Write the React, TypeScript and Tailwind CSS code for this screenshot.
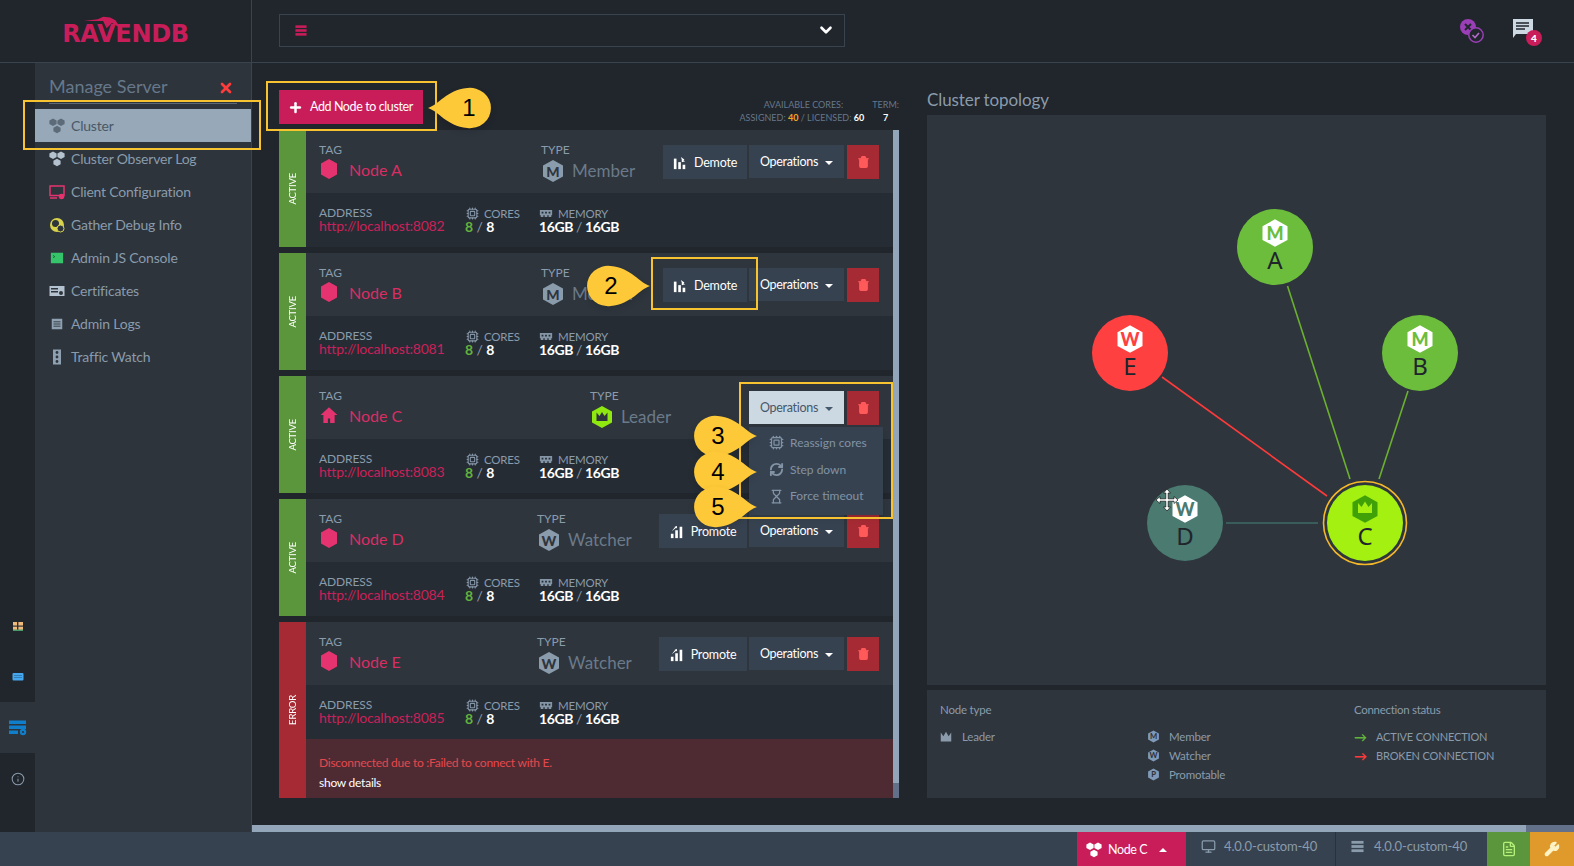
import React from 'react';
import { Plus, ChevronDown, Trash2, Cpu, Monitor, FileText, Wrench, Info, Hourglass, X, RefreshCw } from 'lucide-react';

type NodeInfo = {
    name: string;
    tagIcon?: 'home';
    type: string;
    typeLetter: string;
    typeWidth: string;
    action?: 'Demote' | 'Promote';
    actionWidth: string;
    url: string;
    status: string;
    open?: boolean;
    error?: boolean;
};

const nodes: NodeInfo[] = [
    { name: 'Node A', type: 'Member', typeLetter: 'M', typeWidth: 'w-[122px]', action: 'Demote', actionWidth: 'w-[84px]', url: 'http://localhost:8082', status: 'ACTIVE' },
    { name: 'Node B', type: 'Member', typeLetter: 'M', typeWidth: 'w-[122px]', action: 'Demote', actionWidth: 'w-[84px]', url: 'http://localhost:8081', status: 'ACTIVE' },
    { name: 'Node C', tagIcon: 'home', type: 'Leader', typeLetter: '', typeWidth: 'w-[159px]', actionWidth: '', url: 'http://localhost:8083', status: 'ACTIVE', open: true },
    { name: 'Node D', type: 'Watcher', typeLetter: 'W', typeWidth: 'w-[122px]', action: 'Promote', actionWidth: 'w-[88px]', url: 'http://localhost:8084', status: 'ACTIVE' },
    { name: 'Node E', type: 'Watcher', typeLetter: 'W', typeWidth: 'w-[122px]', action: 'Promote', actionWidth: 'w-[88px]', url: 'http://localhost:8085', status: 'ERROR', error: true },
];

const HEX = '12,1 22,6.5 22,17.5 12,23 2,17.5 2,6.5';

const Hex = ({ fill, letter, letterFill, className }: { fill: string; letter?: string; letterFill?: string; className?: string }) => (
    <svg viewBox="0 0 24 24" className={className}>
        <polygon points={HEX} fill={fill} />
        {letter && <text x="12" y="17.5" textAnchor="middle" fontSize="14" fontWeight="900" fill={letterFill}>{letter}</text>}
    </svg>
);

const ClusterIcon = ({ fill, className }: { fill: string; className?: string }) => (
    <svg viewBox="0 0 16 16" className={className} fill={fill}>
        <polygon points="4,0.5 7.6,2.4 7.6,6 4,7.9 0.4,6 0.4,2.4" />
        <polygon points="12,0.5 15.6,2.4 15.6,6 12,7.9 8.4,6 8.4,2.4" />
        <polygon points="8,7.8 11.6,9.7 11.6,13.3 8,15.2 4.4,13.3 4.4,9.7" />
    </svg>
);

const Crown = ({ fill, className }: { fill: string; className?: string }) => (
    <svg viewBox="0 0 16 16" className={className} fill={fill}>
        <path d="M1 2l3.5 5L8 1l3.5 6L15 2v12H1z" />
    </svg>
);

const StackIcon = ({ className }: { className?: string }) => (
    <svg viewBox="0 0 14 14" className={className} fill="currentColor">
        <rect x="0.5" y="1" width="13" height="3" />
        <rect x="0.5" y="5.5" width="13" height="3" />
        <rect x="0.5" y="10" width="13" height="3" />
    </svg>
);

const DemoteIcon = () => (
    <svg viewBox="0 0 16 16" className="w-[14px] h-[14px]" fill="#fff">
        <rect x="1" y="3" width="3" height="12" />
        <rect x="6" y="7" width="3" height="8" />
        <rect x="11" y="10" width="3" height="5" />
        <path d="M9 1l4 3-1 1 2 1-4 1 0-3z" />
    </svg>
);

const PromoteIcon = () => (
    <svg viewBox="0 0 16 16" className="w-[14px] h-[14px]" fill="#fff">
        <rect x="1" y="10" width="3" height="5" />
        <rect x="6" y="6" width="3" height="9" />
        <rect x="11" y="2" width="3" height="13" />
        <path d="M2 7l4-5-1 0 3-1 0 3-1-1z" />
    </svg>
);

const MemoryIcon = () => (
    <svg viewBox="0 0 16 12" className="w-[14px] h-[11px]" fill="#8495a6">
        <path d="M1 2h14v6h-1v2h-3V8H9.5v2h-3V8H5v2H2V8H1z" />
        <rect x="3" y="4" width="2" height="2" fill="#262c34" />
        <rect x="7" y="4" width="2" height="2" fill="#262c34" />
        <rect x="11" y="4" width="2" height="2" fill="#262c34" />
    </svg>
);

const menuIcons: Record<string, React.ReactNode> = {
    'Cluster': <ClusterIcon fill="#5d6b79" className="w-4 h-4" />,
    'Cluster Observer Log': <ClusterIcon fill="#b4c2cf" className="w-4 h-4" />,
    'Client Configuration': (
        <svg viewBox="0 0 16 16" className="w-4 h-4" fill="none" stroke="#e5336f" strokeWidth="1.5">
            <rect x="1" y="2" width="14" height="9.5" />
            <path d="M1 14h7" />
            <circle cx="12.5" cy="12.5" r="2" fill="#e5336f" />
        </svg>
    ),
    'Gather Debug Info': (
        <svg viewBox="0 0 16 16" className="w-4 h-4">
            <circle cx="8" cy="8" r="7" fill="#d8d24a" />
            <circle cx="6.5" cy="6.5" r="3.5" fill="#2d343c" />
            <circle cx="11.5" cy="11.5" r="3.5" fill="#2d343c" stroke="#d8d24a" />
        </svg>
    ),
    'Admin JS Console': (
        <svg viewBox="0 0 16 16" className="w-[14px] h-[14px]">
            <rect x="1" y="2" width="14" height="12" fill="#36c46a" />
            <path d="M3.5 5l2 1.5-2 1" fill="none" stroke="#1c5a35" strokeWidth="1" />
        </svg>
    ),
    'Certificates': (
        <svg viewBox="0 0 16 16" className="w-4 h-4">
            <rect x="0.5" y="3" width="15" height="10" fill="#b4c2cf" />
            <rect x="2" y="5" width="7" height="1.5" fill="#2d343c" />
            <rect x="2" y="8" width="7" height="1.5" fill="#2d343c" />
            <circle cx="12" cy="10" r="2" fill="#2d343c" />
        </svg>
    ),
    'Admin Logs': (
        <svg viewBox="0 0 16 16" className="w-[14px] h-[14px]">
            <rect x="2" y="2" width="12" height="12" fill="#8fa0b0" />
            <path d="M4 5.5h8M4 8h8M4 10.5h8" stroke="#2d343c" strokeWidth="1" />
        </svg>
    ),
    'Traffic Watch': (
        <svg viewBox="0 0 10 16" className="w-[10px] h-4">
            <rect x="1" y="0.5" width="8" height="15" fill="#8fa0b0" />
            <circle cx="5" cy="3.5" r="1.4" fill="#2d343c" />
            <circle cx="5" cy="8" r="1.4" fill="#2d343c" />
            <circle cx="5" cy="12.5" r="1.4" fill="#2d343c" />
        </svg>
    ),
};

const MenuItem = ({ label, active }: { label: string; active?: boolean }) => (
    <div className={`h-[33px] pl-[14px] flex items-center gap-[6px] text-[14px] tracking-[-0.2px] ${active ? 'bg-[#97a8b8] text-[#4a5866]' : 'text-[#8a9bab]'}`}>
        <span className="w-4 flex justify-center">{menuIcons[label]}</span>
        {label}
    </div>
);

const Rail = () => (
    <div className="w-[35px] flex flex-col justify-end pb-[28px]">
        <div className="h-[51px] flex items-center justify-center">
            <svg viewBox="0 0 12 12" className="w-3 h-3">
                <rect x="1" y="2" width="10" height="9" fill="#f0bb78" />
                <rect x="5" y="2" width="1.4" height="9" fill="#2d343c" />
                <rect x="1" y="5.5" width="10" height="1.2" fill="#2d343c" />
                <rect x="1" y="9.5" width="10" height="1.5" fill="#4c9a6a" />
            </svg>
        </div>
        <div className="h-[51px] flex items-center justify-center">
            <svg viewBox="0 0 12 10" className="w-3 h-[10px]">
                <rect x="0.5" y="1" width="11" height="7.5" rx="1" fill="#45a8ee" />
                <path d="M2.5 3.5h7M2.5 5.5h7" stroke="#1d4a70" strokeWidth="0.9" strokeDasharray="1 1" />
            </svg>
        </div>
        <div className="h-[51px] bg-[#2d343c] flex items-center justify-center">
            <svg viewBox="0 0 20 16" className="w-5 h-4">
                <rect x="1" y="0.5" width="17" height="3.5" fill="#0f7ecb" />
                <rect x="1" y="5.5" width="17" height="3.5" fill="#0f7ecb" />
                <rect x="1" y="10.5" width="9" height="3.5" fill="#0f7ecb" />
                <circle cx="15" cy="12" r="3.2" fill="#0f7ecb" />
                <circle cx="15" cy="12" r="1.1" fill="#2d343c" />
            </svg>
        </div>
        <div className="h-[51px] flex items-center justify-center">
            <Info className="w-[14px] h-[14px] text-[#8a9bab]" strokeWidth={1.75} />
        </div>
    </div>
);

const Sidebar = () => (
    <div className="w-[217px] bg-[#2d343c] border-r border-[#3a444f] shrink-0">
        <div className="h-[41px] mx-[14px] pt-[11px] border-b border-[#5c6a78] flex justify-between items-start">
            <span className="text-[18px] leading-[24px] text-[#66788a]">Manage Server</span>
            <X className="w-[16px] h-[16px] mt-[6px] mr-[3px] text-[#ff3b3b]" strokeWidth={4} />
        </div>
        <div className="mt-[5px]">
            {Object.keys(menuIcons).map(label => (
                <MenuItem key={label} label={label} active={label === 'Cluster'} />
            ))}
        </div>
    </div>
);

const Dropdown = () => (
    <div className="absolute z-10 left-0 top-[36px] w-[134px] h-[88px] bg-[#374250] shadow-md pt-[2px] text-[12px] text-[#8193a5]">
        <div className="h-[27px] pl-[20px] flex items-center gap-[6px]"><Cpu className="w-[15px] h-[15px]" />Reassign cores</div>
        <div className="h-[27px] pl-[20px] flex items-center gap-[6px]"><RefreshCw className="w-[15px] h-[15px]" strokeWidth={3} />Step down</div>
        <div className="h-[26px] pl-[20px] flex items-center gap-[6px]"><Hourglass className="w-[15px] h-[15px]" />Force timeout</div>
    </div>
);

const NodeCard = ({ node }: { node: NodeInfo }) => (
    <div className={`flex ${node.error ? 'h-[176px]' : 'h-[117px]'}`}>
        <div className={`w-[27px] shrink-0 pl-px flex items-center justify-center ${node.error ? 'bg-[#a52a33]' : 'bg-[#5c963c]'}`}>
            <span className="[writing-mode:vertical-rl] rotate-180 text-[9.5px] tracking-[-0.2px] text-white">{node.status}</span>
        </div>
        <div className="flex-1 flex flex-col bg-[#262c34]">
            <div className="h-[63px] bg-[#2e353d] pl-[13px] pr-[14px] flex">
                <div className="flex-1 pt-[13px]">
                    <div className="text-[12px] leading-[14px] text-[#8a9bab]">TAG</div>
                    <div className="flex items-center mt-[1px] pl-px">
                        {node.tagIcon === 'home' ? (
                            <svg viewBox="0 0 16 16" className="w-[18px] h-[20px] mr-[11px] -mt-[2px] fill-[#e5336f]"><path d="M8 1L0.5 8H3v7h4v-4h2v4h4V8h2.5z" /></svg>
                        ) : (
                            <svg viewBox="0 0 18 20" className="w-[18px] h-[20px] mr-[11px] -mt-[2px] fill-[#e5336f]"><polygon points="9,0 17,4.5 17,15.5 9,20 1,15.5 1,4.5" /></svg>
                        )}
                        <span className="text-[16px] leading-[24px] text-[#d92d63]">{node.name}</span>
                    </div>
                </div>
                <div className={`${node.typeWidth} shrink-0 pt-[13px]`}>
                    <div className="text-[12px] leading-[14px] text-[#8a9bab]">TYPE</div>
                    <div className="flex items-center mt-[2px]">
                        {node.typeLetter ? (
                            <Hex fill="#8a9bab" letter={node.typeLetter} letterFill="#2e353d" className="w-[24px] h-[24px] mr-[7px]" />
                        ) : (
                            <svg viewBox="0 0 24 24" className="w-[24px] h-[24px] mr-[7px]">
                                <polygon points={HEX} fill="#8fe80f" />
                                <path d="M6.5 7.5l3 3.5L12 7l2.5 4 3-3.5V16h-11z" fill="#2e353d" />
                            </svg>
                        )}
                        <span className="text-[17px] leading-[24px] text-[#6b7a89]">{node.type}</span>
                    </div>
                </div>
                <div className="flex items-start pt-[15px] shrink-0">
                    {node.action && (
                        <button className={`${node.actionWidth} h-[34px] pt-[2px] bg-[#374250] text-white text-[12.5px] tracking-[-0.2px] flex items-center justify-center gap-[7px] mr-[2px]`}>
                            {node.action === 'Demote' ? <DemoteIcon /> : <PromoteIcon />}
                            {node.action}
                        </button>
                    )}
                    <div className="relative mr-[3px]">
                        <button className={`w-[95px] h-[33px] pt-[2px] text-[12.5px] tracking-[-0.3px] flex items-center justify-center gap-[7px] ${node.open ? 'bg-[#cdd9e2] text-[#46586b]' : 'bg-[#374250] text-white'}`}>
                            Operations
                            <span className={`w-0 h-0 border-x-[4px] border-x-transparent border-t-[4px] ${node.open ? 'border-t-[#46586b]' : 'border-t-white'}`} />
                        </button>
                        {node.open && <Dropdown />}
                    </div>
                    <button className="w-[32px] h-[34px] bg-[#a52a33] flex items-center justify-center">
                        <Trash2 className="w-[13px] h-[14px] text-[#ff5a5a] fill-[#ff5a5a]" />
                    </button>
                </div>
            </div>
            <div className="h-[54px] pl-[13px] flex pt-[13px]">
                <div className="w-[146px]">
                    <div className="text-[12px] leading-[13px] tracking-[-0.1px] text-[#8a9bab]">ADDRESS</div>
                    <div className="text-[14px] leading-[14px] tracking-[-0.2px] text-[#c9215a]">{node.url}</div>
                </div>
                <div className="w-[74px]">
                    <div className="text-[11.5px] leading-[13px] tracking-[-0.2px] text-[#8a9bab] flex items-center pl-[1px] gap-[5px] mt-[1px]">
                        <Cpu className="w-[13px] h-[13px] text-[#8495a6]" />CORES
                    </div>
                    <div className="text-[14px] leading-[13px] font-bold"><span className="text-[#62b33c]">8</span> <span className="font-normal text-[#8a9bab]">/</span> <span className="text-white">8</span></div>
                </div>
                <div>
                    <div className="text-[11.5px] leading-[13px] tracking-[-0.2px] text-[#8a9bab] flex items-center gap-[5px] mt-[1px]">
                        <MemoryIcon />MEMORY
                    </div>
                    <div className="text-[14px] leading-[13px] tracking-[-0.4px] font-bold text-white">16GB <span className="font-normal text-[#8a9bab]">/</span> 16GB</div>
                </div>
            </div>
            {node.error && (
                <div className="flex-1 bg-[#4e2b33] pl-[13px] pt-[14px] text-[12px] leading-[20px] tracking-[-0.25px]">
                    <div className="text-[#e5484d]">Disconnected due to :Failed to connect with E.</div>
                    <div className="text-white">show details</div>
                </div>
            )}
        </div>
    </div>
);

const NodesColumn = () => (
    <div className="w-[620px] shrink-0">
        <div className="h-[67px] flex justify-between">
            <button className="mt-[27px] w-[144px] h-[34px] bg-[#c91d5a] text-white text-[12.5px] tracking-[-0.4px] flex items-center pl-[9px] gap-[7px]">
                <Plus className="w-[15px] h-[15px]" strokeWidth={4} />Add Node to cluster
            </button>
            <div className="mt-[35px] text-[9px] leading-[13px] text-[#66788a] flex gap-[8px]">
                <div className="text-right">
                    <div className="pr-[21px]">AVAILABLE CORES:</div>
                    <div>ASSIGNED: <b className="text-[#f5a623]">40</b> / LICENSED: <b className="text-white">60</b></div>
                </div>
                <div className="text-center">
                    <div>TERM:</div>
                    <b className="text-white">7</b>
                </div>
            </div>
        </div>
        <div className="flex">
            <div className="flex-1 flex flex-col gap-[6px]">
                {nodes.map(node => <NodeCard key={node.name} node={node} />)}
            </div>
            <div className="w-[6px] bg-[#93a5b8] flex flex-col justify-end">
                <div className="h-[15px] bg-[#63708a]" />
            </div>
        </div>
    </div>
);

const graphNodes = [
    { id: 'A', x: 348, y: 132, fill: '#6cbd3c', icon: 'M' },
    { id: 'B', x: 493, y: 238, fill: '#6cbd3c', icon: 'M' },
    { id: 'E', x: 203, y: 238, fill: '#ff4040', icon: 'W' },
    { id: 'D', x: 258, y: 408, fill: '#4a7a70', icon: 'W' },
];

const Topology = () => (
    <svg viewBox="0 0 619 570" className="w-full h-[570px] bg-[#2e353d]">
        <g strokeWidth="1.6">
            <line x1="360.5" y1="171" x2="423" y2="364" stroke="#6cb030" />
            <line x1="481" y1="276" x2="452" y2="364" stroke="#6cb030" />
            <line x1="235" y1="262" x2="400" y2="381" stroke="#ff3a3a" />
            <line x1="299" y1="408" x2="391" y2="408" stroke="#3d6b66" />
        </g>
        {graphNodes.map(n => (
            <g key={n.id}>
                <circle cx={n.x} cy={n.y} r="38" fill={n.fill} />
                <polygon transform={`translate(${n.x - 15} ${n.y - 29}) scale(1.25)`} points={HEX} fill="#fff" />
                <text x={n.x} y={n.y - 7} textAnchor="middle" fontSize="18" fontWeight="900" fill={n.fill}>{n.icon}</text>
                <text x={n.x} y={n.y + 22} textAnchor="middle" fontSize="24" fontFamily="Noto Sans" fill="#20252c">{n.id}</text>
            </g>
        ))}
        <circle cx="438" cy="408" r="41.5" fill="none" stroke="#f5b829" strokeWidth="1.6" />
        <circle cx="438" cy="408" r="38" fill="#a3f011" />
        <polygon transform="translate(423 379) scale(1.25)" points={HEX} fill="#3fa008" />
        <path d="M431 388l3.5 4 3.5-5.5 3.5 5.5 3.5-4v10h-14z" fill="#a3f011" />
        <text x="438" y="430" textAnchor="middle" fontSize="24" fontFamily="Noto Sans" fill="#20252c">C</text>
        <g transform="translate(240 385)" fill="#fff" stroke="#111" strokeWidth="0.7">
            <path d="M0-11l3.5 4H1.2v5.8H7V-3.5l4 3.5-4 3.5V1.2H1.2V7h2.3L0 11l-3.5-4h2.3V1.2H-7v2.3L-11 0l4-3.5v2.3h5.8V-7h-2.3z" />
        </g>
    </svg>
);

const Legend = () => (
    <div className="h-[108px] bg-[#2e353d] flex text-[11.5px] tracking-[-0.2px] text-[#8a9bab] px-[13px] pt-[13px]">
        <div className="w-[207px]">
            <div className="leading-[14px]">Node type</div>
            <div className="mt-[10px] h-[19px] flex items-center gap-[10px]">
                <Crown fill="#8a9bab" className="w-[12px] h-[12px]" />Leader
            </div>
        </div>
        <div className="w-[207px] pt-[24px]">
            {[['M', 'Member'], ['W', 'Watcher'], ['P', 'Promotable']].map(([letter, label]) => (
                <div key={label} className="h-[19px] flex items-center gap-[3px]">
                    <Hex fill="#7f9ab8" letter={letter} letterFill="#2e353d" className="w-[13px] h-[13px]" />
                    <span className="ml-[6px]">{label}</span>
                </div>
            ))}
        </div>
        <div>
            <div className="leading-[14px] tracking-[-0.3px]">Connection status</div>
            <div className="mt-[11px] h-[19px] flex items-center gap-[9px] text-[11px] tracking-[-0.15px]">
                <span className="text-[#62b33c] text-[13px] font-bold w-[13px] leading-none">→</span>ACTIVE CONNECTION
            </div>
            <div className="h-[19px] flex items-center gap-[9px] text-[11px] tracking-[-0.15px]">
                <span className="text-[#ff3a3a] text-[13px] font-bold w-[13px] leading-none">→</span>BROKEN CONNECTION
            </div>
        </div>
    </div>
);

const Footer = () => (
    <div className="h-[34px] bg-[#374250] flex justify-end text-[#8a9bab] text-[13px] tracking-[-0.15px]">
        <div className="w-[109px] pt-[2px] bg-[#c91d5a] text-white text-[12.5px] tracking-[-0.4px] flex items-center pl-[9px] gap-[6px]">
            <ClusterIcon fill="#fff" className="w-4 h-4" />Node C
            <span className="ml-[6px] w-0 h-0 border-x-[4px] border-x-transparent border-b-[4px] border-b-white" />
        </div>
        <div className="w-[150px] flex items-center pl-[15px] pb-[5px] gap-[8px] border-r border-[#2a313a]">
            <Monitor className="w-[15px] h-[15px]" />4.0.0-custom-40
        </div>
        <div className="w-[151px] flex items-center pl-[15px] pb-[5px] gap-[10px]">
            <StackIcon className="w-[13px] h-[13px]" />4.0.0-custom-40
        </div>
        <div className="w-[43px] bg-[#5c963c] flex items-center justify-center">
            <FileText className="w-[16px] h-[18px] text-[#b5f07a]" />
        </div>
        <div className="w-[44px] bg-[#e09a2b] flex items-center justify-center">
            <Wrench className="w-[16px] h-[16px] text-[#fff2c4] fill-[#fff2c4]" />
        </div>
    </div>
);

const Callout = ({ n, pos, flip }: { n: number; pos: string; flip?: boolean }) => (
    <div className={`absolute z-20 w-[66px] h-[42px] ${pos}`}>
        <svg viewBox="0 0 64 42" preserveAspectRatio="none" className={`w-[66px] h-[42px] drop-shadow-md ${flip ? '-scale-x-100' : ''}`}>
            <path d="M0 21C10 18 18 3 38 1A20.2 20.2 0 1 1 38 41C18 39 10 24 0 21Z" fill="#fdc938" />
        </svg>
        <span className={`absolute top-0 h-[42px] w-[50px] flex items-center justify-center text-[24px] text-black [font-family:'Liberation_Sans',sans-serif] ${flip ? 'left-[2px]' : 'right-0'}`}>{n}</span>
    </div>
);

const Annotations = () => (
    <>
        <div className="absolute z-10 left-[23px] top-[100px] w-[238px] h-[50px] border-2 border-[#f7c331]" />
        <div className="absolute z-10 left-[266px] top-[81px] w-[171px] h-[50px] border-2 border-[#f7c331]" />
        <div className="absolute z-10 left-[651px] top-[257px] w-[107px] h-[53px] border-2 border-[#f7c331]" />
        <div className="absolute z-10 left-[739px] top-[382px] w-[154px] h-[137px] border-2 border-[#f7c331]" />
        <Callout n={1} pos="left-[428px] top-[87px]" />
        <Callout n={2} pos="left-[584px] top-[265px]" flip />
        <Callout n={3} pos="left-[691px] top-[415px]" flip />
        <Callout n={4} pos="left-[691px] top-[451px]" flip />
        <Callout n={5} pos="left-[691px] top-[486px]" flip />
    </>
);

const Header = () => (
    <div className="h-[63px] shrink-0 flex border-b border-[#3a444f]">
        <div className="w-[252px] shrink-0 border-r border-[#3a444f] flex items-end justify-center pb-[17px] relative">
            <svg viewBox="0 0 50 14" className="absolute left-[82px] top-[15px] w-[44px] h-[14px]">
                <path d="M2 6l16-2 6-3 8 1 6 3 6 9-10-6-6 6-4-8z" fill="#c91d5a" />
            </svg>
            <span className="relative [font-family:'DejaVu_Sans',sans-serif] font-bold text-[24px] leading-[22px] tracking-[-0.3px] text-[#c91d5a]">RAVENDB</span>
        </div>
        <div className="flex-1 flex items-center justify-between pl-[27px] pr-[35px]">
            <div className="w-[566px] h-[33px] -mt-[2px] border border-[#3a444f] flex items-center justify-between pl-[15px] pr-[9px]">
                <StackIcon className="w-[12px] h-[13px] text-[#c91d5a]" />
                <ChevronDown className="w-[18px] h-[18px] text-white" strokeWidth={3.5} />
            </div>
            <div className="flex items-center gap-[27px]">
                <svg viewBox="0 0 26 26" className="w-[26px] h-[26px]">
                    <circle cx="9" cy="9" r="8" fill="#9a3fb5" />
                    <path d="M6 6l6 6M12 6l-6 6" stroke="#21252c" strokeWidth="2" />
                    <circle cx="17" cy="17" r="7.2" fill="#21252c" stroke="#9a3fb5" strokeWidth="1.5" />
                    <path d="M13.5 17l2.5 2.5 4-4.5" fill="none" stroke="#b56ac9" strokeWidth="1.6" />
                </svg>
                <div className="relative w-[27px] h-[26px]">
                    <svg viewBox="0 0 22 22" className="w-[22px] h-[22px]">
                        <path d="M1 1h20v15H4l-3 4z" fill="#cdd9e2" />
                        <path d="M4 5h13M4 8h13M4 11h9" stroke="#21252c" strokeWidth="1.5" />
                    </svg>
                    <span className="absolute right-[-3px] bottom-[-2px] w-[16px] h-[16px] rounded-full bg-[#c91d5a] text-white text-[10px] font-black flex items-center justify-center">4</span>
                </div>
            </div>
        </div>
    </div>
);

const App: React.FC = () => {
    return (
        <div className="relative h-[866px] overflow-hidden bg-[#21252c] flex flex-col [font-family:Lato,sans-serif]">
            <Header />
            <div className="flex-1 flex min-h-0">
                <Rail />
                <Sidebar />
                <div className="flex-1 flex flex-col min-w-0">
                    <div className="flex-1 flex pl-[27px] min-h-0">
                        <NodesColumn />
                        <div className="w-[619px] ml-[28px] shrink-0">
                            <h2 className="h-[52px] pt-[27px] text-[17px] leading-[20px] tracking-[-0.1px] text-[#8a9bab]">Cluster topology</h2>
                            <Topology />
                            <div className="h-[5px]" />
                            <Legend />
                        </div>
                    </div>
                    <div className="h-[7px] bg-[#93a5b8] flex justify-end shrink-0">
                        <div className="w-[48px] bg-[#63708a]" />
                    </div>
                </div>
            </div>
            <Footer />
            <Annotations />
        </div>
    );
};

export default App;
